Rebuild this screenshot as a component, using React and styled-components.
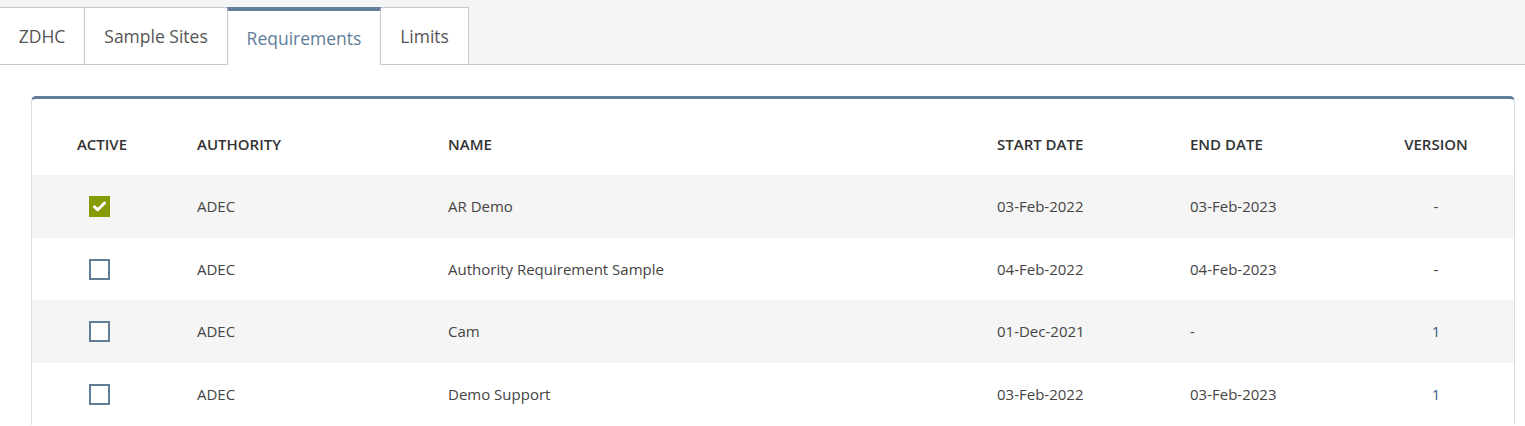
import styled, { createGlobalStyle } from 'styled-components'

const GlobalStyle = createGlobalStyle`
    body {
        margin: 0;
        background: #ffffff;
        font-family: 'Open Sans', 'Liberation Sans', sans-serif;
        color: #444;
    }
`

const TabBar = styled.div`
    display: flex;
    background: #f4f4f4;
    padding-top: 7px;
    border-bottom: 1px solid #c8c8c8;
    height: 57px;
`

const Tab = styled.div`
    display: flex;
    align-items: center;
    justify-content: center;
    width: ${({ $w }) => $w}px;
    height: 58px;
    box-sizing: border-box;
    background: #ffffff;
    border: 1px solid #c8c8c8;
    border-left-width: ${({ $first }) => ($first ? 0 : 1)}px;
    margin-left: ${({ $first }) => ($first ? 0 : -1)}px;
    font-size: 17.5px;
    color: ${({ $active }) => ($active ? '#5f7d99' : '#555')};
    ${({ $active }) =>
        $active &&
        `
        border-top: 4px solid #647f99;
        border-bottom-color: #ffffff;
        position: relative;
        z-index: 1;
    `}
`

const Content = styled.div`
    padding: 31px 10px 0 31px;
`

const Card = styled.div`
    border-top: 3px solid #647f99;
    border-left: 1px solid #dcdcdc;
    border-right: 1px solid #dcdcdc;
    border-radius: 5px 5px 0 0;
    background: #ffffff;
`

const Table = styled.table`
    width: 100%;
    border-collapse: collapse;
    table-layout: fixed;
    font-size: 15px;
`

const HeadCell = styled.th`
    height: 76px;
    box-sizing: border-box;
    padding: 14px 0 0 ${({ $center }) => ($center ? 0 : 25)}px;
    text-align: ${({ $center }) => ($center ? 'center' : 'left')};
    font-weight: 600;
    text-transform: uppercase;
    color: #333;
    vertical-align: middle;
`

const Row = styled.tr`
    background: ${({ $striped }) => ($striped ? '#f5f5f5' : '#ffffff')};
`

const Cell = styled.td`
    height: 62.5px;
    padding: 0 0 0 ${({ $center }) => ($center ? 0 : 25)}px;
    text-align: ${({ $center }) => ($center ? 'center' : 'left')};
    color: ${({ $link }) => ($link ? '#3b5b87' : '#444')};
    vertical-align: middle;
`

const Box = styled.span`
    display: inline-flex;
    align-items: center;
    justify-content: center;
    width: 21px;
    height: 21px;
    box-sizing: border-box;
    border: ${({ $checked }) => ($checked ? 'none' : '2px solid #627d96')};
    background: ${({ $checked }) => ($checked ? '#859b00' : '#ffffff')};
    vertical-align: middle;
    margin-left: -5px;
`

const tabs = [
    { label: 'ZDHC', w: 85 },
    { label: 'Sample Sites', w: 144 },
    { label: 'Requirements', w: 154, active: true },
    { label: 'Limits', w: 89 },
]

const columns = [140, 251, 549, 193, 193, 156]

const rows = [
    { active: true, authority: 'ADEC', name: 'AR Demo', start: '03-Feb-2022', end: '03-Feb-2023', version: '-' },
    { active: false, authority: 'ADEC', name: 'Authority Requirement Sample', start: '04-Feb-2022', end: '04-Feb-2023', version: '-' },
    { active: false, authority: 'ADEC', name: 'Cam', start: '01-Dec-2021', end: '-', version: '1' },
    { active: false, authority: 'ADEC', name: 'Demo Support', start: '03-Feb-2022', end: '03-Feb-2023', version: '1' },
]

function Check() {
    return (
        <svg width="13" height="11" viewBox="0 0 13 11">
            <path d="M1.5 5.8 L4.8 8.8 L11.5 2" fill="none" stroke="#ffffff" strokeWidth="3" strokeLinecap="round" strokeLinejoin="round" />
        </svg>
    )
}

function App() {
    return (
        <>
            <GlobalStyle />
            <TabBar>
                {tabs.map((t, i) => (
                    <Tab key={t.label} $w={t.w} $active={t.active} $first={i === 0}>
                        {t.label}
                    </Tab>
                ))}
            </TabBar>
            <Content>
                <Card>
                    <Table>
                        <colgroup>
                            {columns.map((w, i) => (
                                <col key={i} style={{ width: w }} />
                            ))}
                        </colgroup>
                        <thead>
                            <tr>
                                <HeadCell $center>Active</HeadCell>
                                <HeadCell>Authority</HeadCell>
                                <HeadCell>Name</HeadCell>
                                <HeadCell>Start Date</HeadCell>
                                <HeadCell>End Date</HeadCell>
                                <HeadCell $center>Version</HeadCell>
                            </tr>
                        </thead>
                        <tbody>
                            {rows.map((r, i) => (
                                <Row key={r.name} $striped={i % 2 === 0}>
                                    <Cell $center>
                                        <Box $checked={r.active}>{r.active && <Check />}</Box>
                                    </Cell>
                                    <Cell>{r.authority}</Cell>
                                    <Cell>{r.name}</Cell>
                                    <Cell>{r.start}</Cell>
                                    <Cell>{r.end}</Cell>
                                    <Cell $center $link={r.version !== '-'}>{r.version}</Cell>
                                </Row>
                            ))}
                        </tbody>
                    </Table>
                </Card>
            </Content>
        </>
    )
}

export default App
